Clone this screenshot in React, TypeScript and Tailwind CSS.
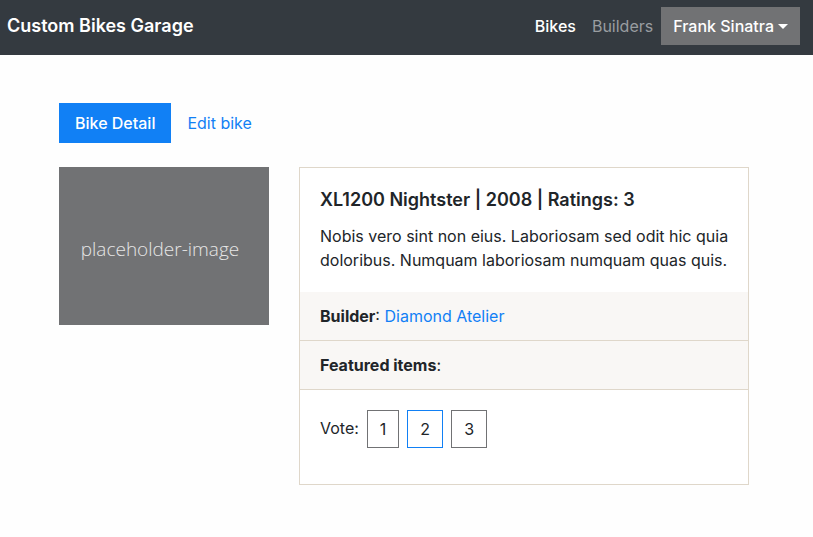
const votes = [1, 2, 3];

function Navbar() {
  return (
    <header className="flex h-[55px] items-center justify-between bg-[#343a40] pr-[13px] pb-[3px] pl-[7px] text-white">
      <a href="#" className="text-lg leading-[30px] font-semibold">
        Custom Bikes Garage
      </a>
      <nav className="flex items-center font-medium">
        <a href="#bikes" className="px-2">
          Bikes
        </a>
        <a href="#builders" className="px-2 font-normal text-[#999da1]">
          Builders
        </a>
        <button
          type="button"
          aria-haspopup="menu"
          className="flex h-[38px] items-center gap-1 bg-[#717274] px-3 font-medium"
        >
          Frank Sinatra
          <svg width="10" height="5" viewBox="0 0 10 5" aria-hidden="true">
            <path d="M0 0h10L5 5z" fill="currentColor" />
          </svg>
        </button>
      </nav>
    </header>
  );
}

function BikeCard() {
  return (
    <article className="border border-[#dfd7ca] bg-white">
      <div className="pt-5 pr-4 pb-5 pl-5">
        <h1 className="mb-3 text-lg leading-6 font-semibold">
          XL1200 Nightster | 2008 | Ratings: 3
        </h1>
        <p>
          Nobis vero sint non eius. Laboriosam sed odit hic quia doloribus.
          Numquam laboriosam numquam quas quis.
        </p>
      </div>
      <ul className="bg-[#f9f7f5]">
        <li className="border-b border-[#dfd7ca] px-5 py-3">
          <strong className="font-bold">Builder</strong>:{" "}
          <a href="#builder" className="text-[#1180f5]">
            Diamond Atelier
          </a>
        </li>
        <li className="border-b border-[#dfd7ca] px-5 py-3">
          <strong className="font-bold">Featured items</strong>:
        </li>
      </ul>
      <div className="flex items-start gap-2 px-5 pt-5 pb-9">
        <span className="leading-9">Vote:</span>
        {votes.map((vote) => (
          <button
            key={vote}
            type="button"
            className={
              vote === 2
                ? "h-[38px] border border-[#1180f5] px-3"
                : "h-[38px] border border-[#717274] px-3"
            }
          >
            {vote}
          </button>
        ))}
      </div>
    </article>
  );
}

export default function App() {
  return (
    <div className="min-h-screen bg-[#fefefe] font-['Inter',sans-serif] text-base leading-6 text-[#212529]">
      <Navbar />
      <main className="pt-12 pr-16 pl-[59px]">
        <nav className="mb-6 flex">
          <a href="#detail" className="bg-[#1180f5] px-4 py-2 font-medium text-white">
            Bike Detail
          </a>
          <a href="#edit" className="px-4 py-2 text-[#1180f5]">
            Edit bike
          </a>
        </nav>
        <div className="grid grid-cols-[7fr_15fr] items-start gap-[30px]">
          <div className="flex h-[158px] items-center justify-center bg-[#717274] pt-1.5 pr-2 font-['Open_Sans',sans-serif] text-[19px] font-light text-[#e6e6e6]">
            placeholder-image
          </div>
          <BikeCard />
        </div>
      </main>
    </div>
  );
}
